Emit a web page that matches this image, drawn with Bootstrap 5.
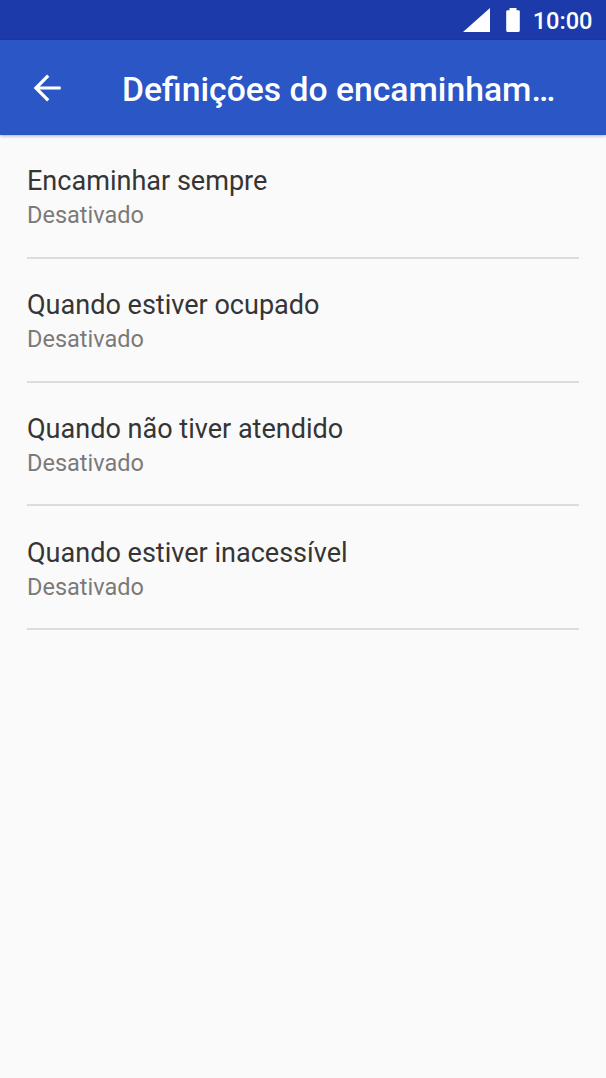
<!DOCTYPE html>
<html lang="pt">
<head>
<meta charset="utf-8">
<meta name="viewport" content="width=device-width, initial-scale=1">
<title>Definições do encaminhamento</title>
<link href="https://cdn.jsdelivr.net/npm/bootstrap@5.3.0/dist/css/bootstrap.min.css" rel="stylesheet">
<style>
body{font-family:Roboto,sans-serif;background:#fafafa;height:1078px;overflow:hidden}
.status-bar{height:40px;background:#1c3aa9;padding:0 13.500px 0 0;font-size:23.6px;font-weight:500;line-height:1}
.clock{padding-top:4px;margin-left:12.800px}
.app-bar{height:95px;background:#2a56c6;padding:0 51px 0 33px;box-shadow:0 1px 3px rgba(0,0,0,.3)}
.app-title{font-size:33.7px;font-weight:500;line-height:44px;margin-left:61px;padding-top:5px}
.settings{padding:0 27px}
.setting{height:123.8px;padding-top:30.4px;border-bottom:2px solid #dcdcdc;color:#353535}
.setting-name{font-size:27.05px;line-height:32px}
.setting-state{font-size:23.5px;line-height:28px;color:#7a7a7a;margin-top:4px}
</style>
</head>
<body>
<div class="status-bar d-flex align-items-center justify-content-end text-white">
<svg width="27" height="24" viewBox="0 0 27 24"><path fill="#fff" d="M27 0v24H0z"/></svg>
<svg class="ms-3" width="14" height="24" viewBox="0 0 14 24"><path fill="#fff" d="M3.500 0h7v2.300h2q1.300 0 1.300 1.300v19q0 1.400-1.300 1.400h-11Q.2 24 .2 22.600v-19q0-1.300 1.300-1.300h2z"/></svg>
<span class="clock">10:00</span>
</div>
<header class="app-bar d-flex align-items-center text-white">
<svg class="flex-shrink-0" width="28" height="28" viewBox="0 0 28 28" fill="none" stroke="#fff" stroke-width="3.200"><path d="M27.700 14H3.500M15.200 1.700 2.900 14l12.300 12.300"/></svg>
<h1 class="app-title mb-0 text-nowrap">Definições do encaminham…</h1>
</header>
<main class="settings">
<div class="setting"><div class="setting-name">Encaminhar sempre</div><div class="setting-state">Desativado</div></div>
<div class="setting"><div class="setting-name">Quando estiver ocupado</div><div class="setting-state">Desativado</div></div>
<div class="setting"><div class="setting-name">Quando não tiver atendido</div><div class="setting-state">Desativado</div></div>
<div class="setting"><div class="setting-name">Quando estiver inacessível</div><div class="setting-state">Desativado</div></div>
</main>
<script src="https://cdn.jsdelivr.net/npm/bootstrap@5.3.0/dist/js/bootstrap.bundle.min.js"></script>
</body>
</html>
